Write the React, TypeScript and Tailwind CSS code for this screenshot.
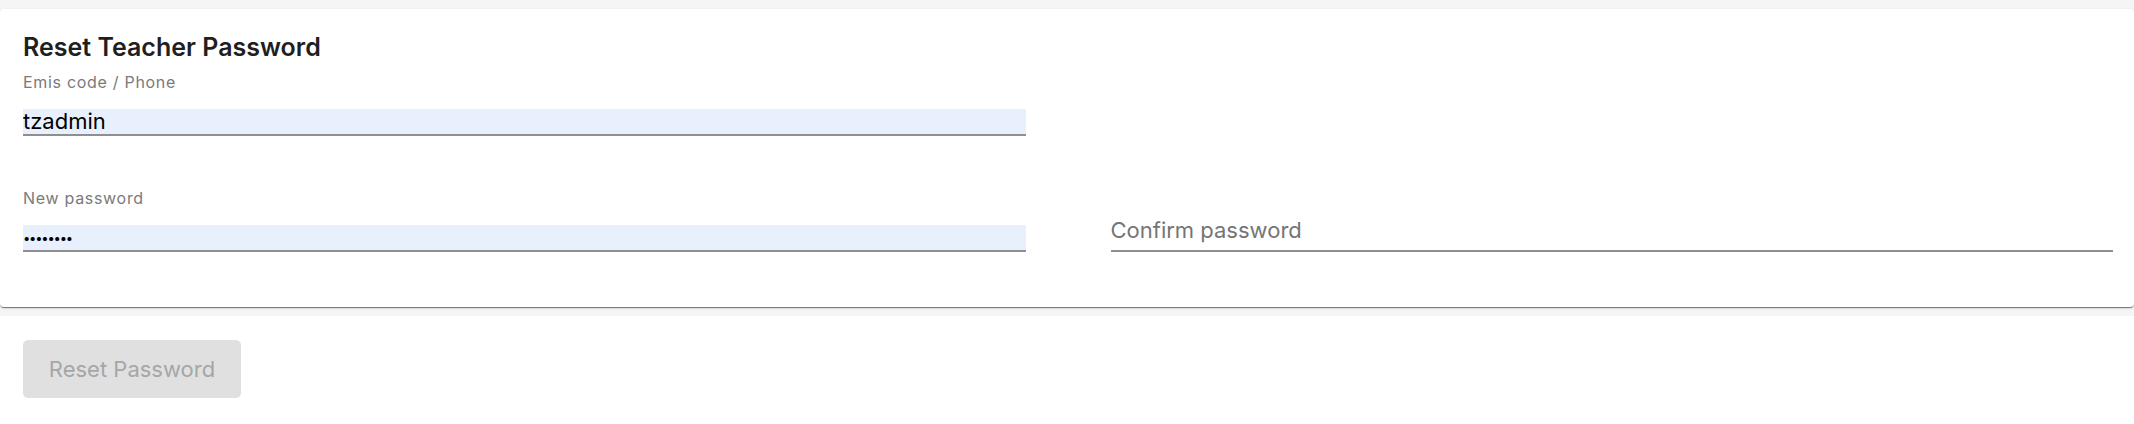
import React from "react";

export default function App() {
  const font = { fontFamily: "Inter, 'Noto Sans', sans-serif" };
  return (
    <div className="w-full min-h-[424px] bg-white" style={font}>
      <div className="bg-[#f5f5f5] py-[9px]">
        <div className="bg-white rounded-[4px] shadow-[0_2px_1px_-1px_rgba(0,0,0,0.35),0_1px_1px_0_rgba(0,0,0,0.2),0_1px_3px_0_rgba(0,0,0,0.12)] pl-[23px] pr-[21px] pt-[23px] pb-[55px]">
          <h2 className="text-[25px] leading-[30px] font-semibold text-[#1f1f1f]">
            Reset Teacher Password
          </h2>
          <div className="grid grid-cols-2 gap-x-[85px]">
            <div>
              <div className="mt-[11px] text-[16px] leading-[18px] tracking-[0.7px] text-[#7a7a7a]">
                Emis code / Phone
              </div>
              <input
                readOnly
                value="tzadmin"
                className="mt-[18px] block w-full h-[27px] bg-[#e8f0fe] border-b-2 border-[#8f8f8f] text-[22px] leading-[25px] text-black outline-none pb-[2px]"
                style={font}
              />
            </div>
            <div />
            <div>
              <div className="mt-[53px] text-[16px] leading-[18px] tracking-[0.7px] text-[#7a7a7a]">
                New password
              </div>
              <input
                readOnly
                type="password"
                value="12345678"
                className="mt-[18px] block w-full h-[27px] bg-[#e8f0fe] border-b-2 border-[#8f8f8f] text-[13px] leading-[25px] text-black outline-none tracking-[-1.2px]"
                style={font}
              />
            </div>
            <div className="flex items-end">
              <input
                readOnly
                placeholder="Confirm password"
                className="block w-full h-[35px] bg-white border-b-2 border-[#8f8f8f] text-[22px] leading-[25px] text-black placeholder:text-[#757575] outline-none pb-[8px]"
                style={font}
              />
            </div>
          </div>
        </div>
      </div>
      <div className="px-[23px] pt-[24px]">
        <button
          disabled
          className="w-[218px] h-[58px] rounded-[5px] bg-[#e0e0e0] text-[#a6a6a6] text-[22px]"
          style={font}
        >
          Reset Password
        </button>
      </div>
    </div>
  );
}
